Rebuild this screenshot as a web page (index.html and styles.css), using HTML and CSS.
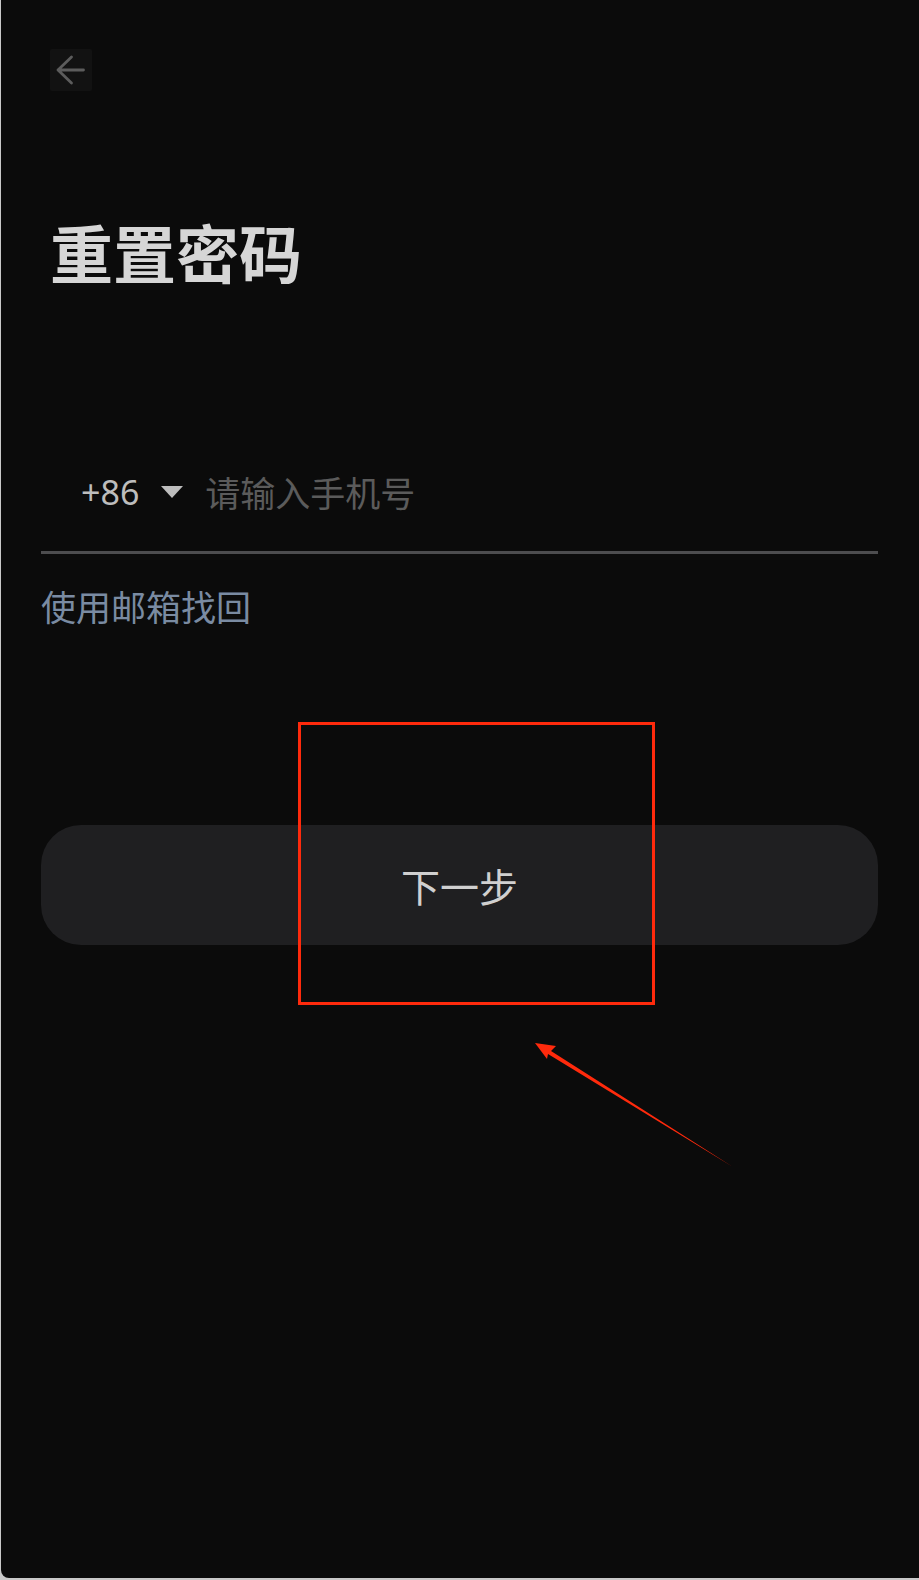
FILE: index.html
```html
<!DOCTYPE html>
<html lang="zh-CN">
<head>
<meta charset="utf-8">
<title>重置密码</title>
<link rel="stylesheet" href="styles.css">
</head>
<body>
<div class="screen">
  <button class="back" aria-label="返回">
    <svg width="42" height="42" viewBox="0 0 42 42">
      <path d="M33.5 21 H8 M21.5 8 L8 21 L21.5 34" fill="none" stroke="#5c5c5c" stroke-width="2.8" stroke-linecap="round" stroke-linejoin="round"/>
    </svg>
  </button>
  <h1 class="title">重置密码</h1>
  <div class="phone-row">
    <span class="code">+86</span>
    <span class="caret"></span>
    <span class="placeholder">请输入手机号</span>
  </div>
  <div class="alt-link">使用邮箱找回</div>
  <button class="next">下一步</button>

  <svg class="annotation" width="919" height="1580" viewBox="0 0 919 1580">
    <rect x="299.5" y="723.5" width="354" height="280" fill="none" stroke="#ff2a0c" stroke-width="3"/>
    <polygon points="535,1043 556,1046 551,1051 733,1167 548,1054 547,1059" fill="#ff2a0c"/>
  </svg>
</div>
</body>
</html>
```

FILE: styles.css
```css
html, body {
  margin: 0;
  padding: 0;
}
body {
  background: #c9c9c9;
  font-family: "Noto Sans", "Noto Sans CJK SC", sans-serif;
}
.screen {
  position: relative;
  margin-left: 1px;
  height: 1578px;
  background: #0b0b0b;
  border-bottom-left-radius: 8px;
  padding: 49px 41px 0 40px;
  box-sizing: border-box;
  overflow: hidden;
}
.back {
  display: block;
  width: 42px;
  height: 42px;
  margin-left: 9px;
  padding: 0;
  border: none;
  border-radius: 2px;
  background: #121212;
}
.back svg {
  display: block;
}
.title {
  margin: 128px 0 0 9px;
  font-family: "Noto Sans CJK SC", sans-serif;
  font-weight: 700;
  font-size: 63px;
  line-height: 1;
  color: #d6d6d6;
}
.phone-row {
  display: flex;
  align-items: center;
  margin-top: 192px;
  padding: 0 0 42px 40px;
  border-bottom: 3px solid #4d4d4f;
  height: 35px;
}
.code {
  font-family: "Noto Sans", sans-serif;
  font-size: 34px;
  line-height: 1;
  color: #bdbdbd;
}
.caret {
  width: 0;
  height: 0;
  margin: 0 22px 0 22px;
  border-left: 11px solid transparent;
  border-right: 11px solid transparent;
  border-top: 12px solid #bdbdbd;
}
.placeholder {
  font-family: "Noto Sans CJK SC", sans-serif;
  font-size: 35px;
  line-height: 1;
  color: #5b5b5b;
}
.alt-link {
  margin-top: 34px;
  font-family: "Noto Sans CJK SC", sans-serif;
  font-size: 35px;
  line-height: 1;
  color: #7a8ba2;
}
.next {
  display: flex;
  align-items: center;
  justify-content: center;
  width: 100%;
  height: 120px;
  margin-top: 202px;
  border: none;
  border-radius: 40px;
  background: #1f1f21;
  font-family: "Noto Sans CJK SC", sans-serif;
  font-size: 39px;
  color: #d0d0d0;
}
.annotation {
  position: absolute;
  left: -1px;
  top: 0;
  pointer-events: none;
}
```
